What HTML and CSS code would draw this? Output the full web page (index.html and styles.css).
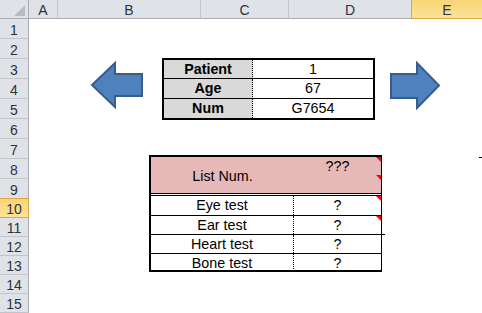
FILE: index.html
```html
<!DOCTYPE html>
<html>
<head>
<meta charset="utf-8">
<link rel="stylesheet" href="styles.css">
</head>
<body>
<div class="sheet">
  <div class="colheads">
    <div class="corner"><span class="corner-tri"></span></div>
    <div class="ch ch-a">A</div>
    <div class="ch ch-b">B</div>
    <div class="ch ch-c">C</div>
    <div class="ch ch-d">D</div>
    <div class="ch ch-e sel">E</div>
  </div>
  <div class="body">
    <div class="rowheads">
      <div class="rh">1</div>
      <div class="rh">2</div>
      <div class="rh">3</div>
      <div class="rh">4</div>
      <div class="rh">5</div>
      <div class="rh">6</div>
      <div class="rh">7</div>
      <div class="rh">8</div>
      <div class="rh pre">9</div>
      <div class="rh short sel">10</div>
      <div class="rh short">11</div>
      <div class="rh short">12</div>
      <div class="rh short">13</div>
      <div class="rh short">14</div>
      <div class="rh short">15</div>
    </div>
    <div class="canvas">
      <div class="top">
        <svg class="arrow arrow-left" viewBox="0 0 54 48" width="54" height="48">
          <path d="M2,24 L25,2 L25,13 L52,13 L52,35 L25,35 L25,46 Z" fill="#4f81bd" stroke="#385d8a" stroke-width="2" stroke-linejoin="miter"/>
        </svg>
        <div class="ptable">
          <div class="pl pr1">Patient</div>
          <div class="pv pr1">1</div>
          <div class="pl pr2">Age</div>
          <div class="pv pr2">67</div>
          <div class="pl pr3">Num</div>
          <div class="pv pr3">G7654</div>
        </div>
        <svg class="arrow arrow-right" viewBox="0 0 52 49" width="52" height="49">
          <path d="M2,13 L28,13 L28,2 L50,24.5 L28,47 L28,37 L2,37 Z" fill="#4f81bd" stroke="#385d8a" stroke-width="2" stroke-linejoin="miter"/>
        </svg>
      </div>
      <div class="bottom">
        <div class="ltable">
          <div class="lhead">
            <div class="hlab">List Num.</div>
            <div class="hval">???<span class="tri"></span><span class="tri tri-mid"></span></div>
          </div>
          <div class="lrow r-eye">
            <div class="lab">Eye test</div>
            <div class="val">?<span class="tri"></span></div>
          </div>
          <div class="lrow r-ear">
            <div class="lab">Ear test</div>
            <div class="val">?<span class="tri"></span></div>
          </div>
          <div class="lrow r-heart">
            <div class="lab">Heart test</div>
            <div class="val">?</div>
          </div>
          <div class="lrow r-bone">
            <div class="lab">Bone test</div>
            <div class="val">?</div>
          </div>
        </div>
        <span class="dash"></span>
      </div>
    </div>
  </div>
</div>
</body>
</html>
```
FILE: styles.css
```css
html, body {
  margin: 0;
  padding: 0;
  background: #ffffff;
}

body {
  font-family: "Liberation Sans", Arial, sans-serif;
  color: #000;
}

.sheet {
  width: 482px;
  height: 313px;
  overflow: hidden;
  display: flex;
  flex-direction: column;
}

/* column headers */
.colheads {
  display: flex;
  height: 19px;
  flex: none;
}

.corner {
  width: 29px;
  height: 19px;
  box-sizing: border-box;
  background: #dfe3e8;
  border-right: 1px solid #a9adb2;
  border-bottom: 1px solid #a9adb2;
  display: flex;
  justify-content: flex-end;
  align-items: flex-end;
  padding: 0 3px 2px 0;
}

.corner-tri {
  width: 0;
  height: 0;
  border-bottom: 11px solid #b8bcc1;
  border-left: 11px solid transparent;
}

.ch {
  box-sizing: border-box;
  height: 19px;
  background: #dfe3e8;
  border-bottom: 1px solid #a9adb2;
  border-right: 1px solid #c2c6cb;
  display: flex;
  align-items: center;
  justify-content: center;
  padding-top: 2px;
  font-size: 14px;
  color: #2a3340;
}

.ch-a { width: 29px; }
.ch-b { width: 143px; }
.ch-c { width: 88px; }
.ch-d { width: 122px; border-right: none; }
.ch-e { flex: 1; }

.ch.sel {
  background: linear-gradient(#f9d574, #fbe29a);
  border-left: 1px solid #e2a43c;
  border-bottom: 1px solid #e2a43c;
  border-right: none;
}

/* body */
.body {
  display: flex;
  flex: 1;
}

.rowheads {
  width: 29px;
  flex: none;
  display: flex;
  flex-direction: column;
}

.rh {
  box-sizing: border-box;
  height: 20px;
  flex: none;
  background: #dfe3e8;
  border-right: 1px solid #a9adb2;
  border-bottom: 1px solid #c2c6cb;
  display: flex;
  align-items: center;
  justify-content: center;
  padding-top: 2px;
  font-size: 14px;
  color: #2a3340;
}

.rh.short { height: 19px; }

.rh.pre { border-bottom-color: #e2a43c; }

.rh.sel {
  background: linear-gradient(#f9d574, #fbe29a);
  border-right-color: #e2a43c;
  border-bottom-color: #e2a43c;
}

.canvas {
  flex: 1;
  position: relative;
  padding-top: 39px;
  display: flex;
  flex-direction: column;
  align-items: flex-start;
}

.top {
  display: flex;
  align-items: flex-start;
  margin-left: 61px;
}

.arrow { display: block; flex: none; }

.arrow-left {
  margin-top: 3px;
  margin-right: 18px;
}

.arrow-right {
  margin-top: 3px;
  margin-left: 14px;
}

/* patient table */
.ptable {
  box-sizing: border-box;
  width: 213px;
  border: 2px solid #000;
  display: grid;
  grid-template-columns: 89px 120px;
  font-size: 14.3px;
}

.pl {
  background: #d9d9d9;
  border-right: 1px dotted #000;
  font-weight: bold;
  text-align: center;
}

.pv {
  text-align: center;
}

.pr1 {
  line-height: 18px;
  border-bottom: 1px solid #000;
}

.pr2 {
  line-height: 19px;
  border-bottom: 1px solid #000;
}

.pr3 {
  line-height: 19px;
}

/* list table */
.bottom {
  display: flex;
  align-items: flex-start;
  margin-left: 120px;
  margin-top: 35px;
}

.ltable {
  box-sizing: border-box;
  width: 233px;
  border-top: 2px solid #000;
  border-left: 2px solid #000;
  border-right: 1px solid #000;
  border-bottom: 2px solid #000;
  font-size: 14.3px;
}

.lhead {
  box-sizing: border-box;
  height: 39px;
  display: grid;
  grid-template-columns: 143px 87px;
  background: #e6b8b7;
  background-clip: padding-box;
  border-bottom: 3px double #000;
}

.hlab {
  display: flex;
  align-items: center;
  justify-content: center;
  padding-top: 2px;
}

.hval {
  position: relative;
  text-align: center;
  line-height: 19px;
}

.lrow {
  box-sizing: border-box;
  display: grid;
  grid-template-columns: 143px 87px;
  height: 19px;
  line-height: 18px;
  border-bottom: 1px solid #000;
}

.lrow .lab {
  border-right: 1px dotted #000;
  text-align: center;
}

.lrow .val {
  position: relative;
  text-align: center;
}

.r-eye {
  height: 20px;
  line-height: 19px;
}

.r-ear {
  position: relative;
}

.r-ear::after {
  content: "";
  position: absolute;
  right: -4px;
  bottom: -1px;
  width: 3px;
  height: 1px;
  background: #000;
}

.r-bone {
  height: 16px;
  line-height: 19px;
  border-bottom: none;
  overflow: hidden;
}

.tri {
  position: absolute;
  top: 0;
  right: 0;
  width: 0;
  height: 0;
  border-top: 5px solid #ff0000;
  border-left: 5px solid transparent;
}

.tri-mid { top: 18px; }

.dash {
  flex: none;
  width: 3px;
  height: 1px;
  background: #000;
  margin-left: 97px;
  margin-top: 2px;
}
```
